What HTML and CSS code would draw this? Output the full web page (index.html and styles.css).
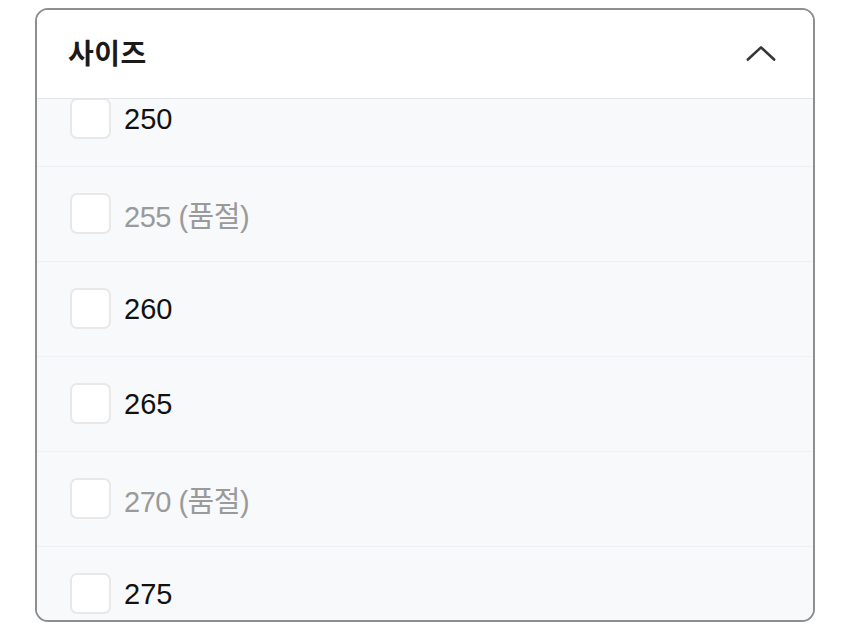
FILE: index.html
```html
<!DOCTYPE html>
<html lang="ko">

<head>
    <meta charset="UTF-8">
    <meta name="viewport" content="width=device-width, initial-scale=1.0">
    <title>사이즈 필터</title>
    <link rel="stylesheet" href="styles.css">
</head>

<body>
    <div class="filter">
        <div class="filter-head">
            <h2>사이즈</h2>
            <svg class="chevron" width="32" height="18" viewBox="0 0 32 18">
                <path d="M2 16 L16 3 L30 16" fill="none" stroke="#363636" stroke-width="2.8" stroke-linecap="round" stroke-linejoin="round" />
            </svg>
        </div>
        <div class="filter-body">
            <ul class="size-list">
                <li class="size-row"><span class="box"></span><span>250</span></li>
                <li class="size-row soldout"><span class="box"></span><span>255 (품절)</span></li>
                <li class="size-row"><span class="box"></span><span>260</span></li>
                <li class="size-row"><span class="box"></span><span>265</span></li>
                <li class="size-row soldout"><span class="box"></span><span>270 (품절)</span></li>
                <li class="size-row"><span class="box"></span><span>275</span></li>
            </ul>
        </div>
    </div>
</body>

</html>
```

FILE: styles.css
```css
body {
    margin: 0;
    padding: 8px 35px;
    background: #fff;
    font-family: "Liberation Sans", "Noto Sans CJK KR", sans-serif;
}

.filter {
    height: 610px;
    border: 2px solid #8e8e8e;
    border-radius: 13px;
    overflow: hidden;
    display: flex;
    flex-direction: column;
}

.filter-head {
    height: 88px;
    flex-shrink: 0;
    display: flex;
    align-items: center;
    justify-content: space-between;
    padding: 0 37px 0 31px;
    background: #fff;
    border-bottom: 1px solid #e3e5e9;
}

.filter-head h2 {
    margin: 0 0 4px;
    font-family: "Noto Sans CJK KR", sans-serif;
    font-size: 28px;
    font-weight: 700;
    color: #1a1a1a;
    letter-spacing: 0.5px;
}

.chevron {
    margin-top: -2px;
    width: 30px;
}

.filter-body {
    flex: 1;
    overflow: hidden;
    background: #f8f9fb;
}

/* list is scrolled a little past the first row */
.size-list {
    list-style: none;
    margin: -27px 0 0;
    padding: 0;
}

.size-row {
    height: 94px;
    display: flex;
    align-items: center;
    gap: 13px;
    padding-left: 33px;
    border-bottom: 1px solid #eef0f3;
    font-size: 29px;
    color: #111;
}

.box {
    width: 37px;
    height: 37px;
    background: #fff;
    border: 2px solid #e7e8ea;
    border-radius: 7px;
    margin-top: -2px;
}

.soldout {
    color: #9a9a9a;
    letter-spacing: -0.5px;
}
```
